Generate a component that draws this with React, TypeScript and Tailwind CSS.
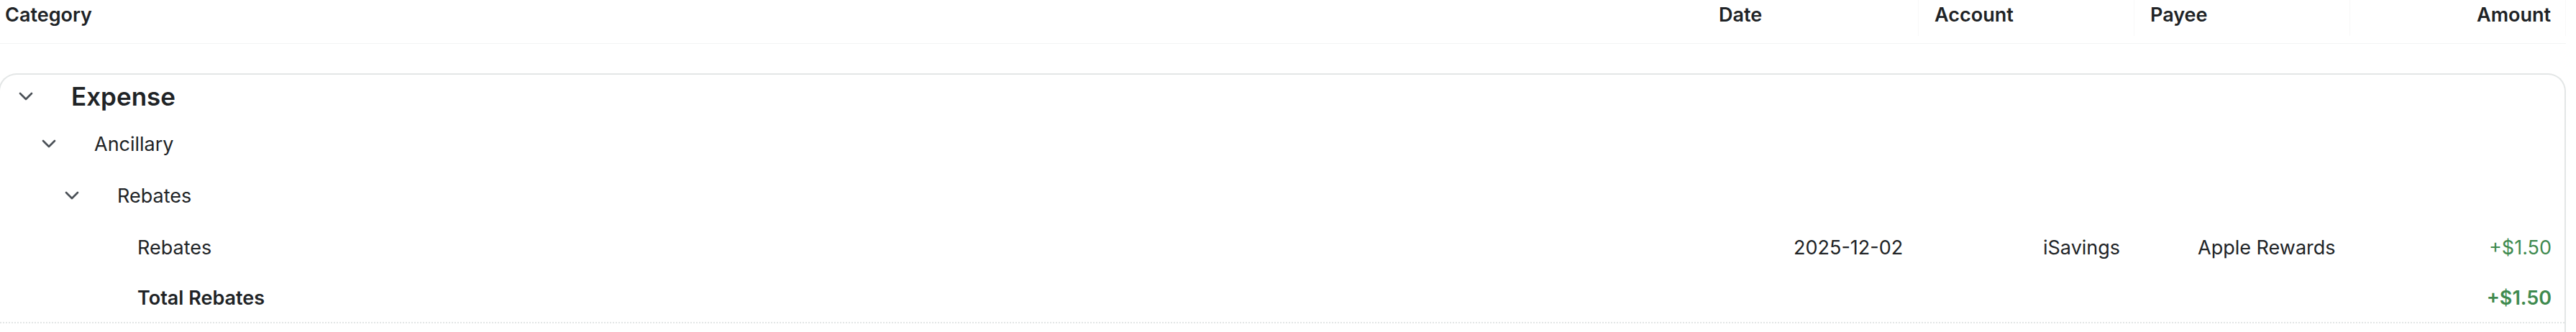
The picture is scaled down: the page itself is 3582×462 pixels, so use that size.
import { ChevronDown } from "lucide-react"

interface rowConfig {
    name: string;
    depth: number;
    kind: "group" | "leaf" | "total";
    height: string;
    date?: string;
    account?: string;
    payee?: string;
    amount?: string;
    big?: boolean;
}

// filas del arbol de categorias
const rows: rowConfig[] = [
    { name: "Expense", depth: 0, kind: "group", height: "h-[60px]", big: true },
    { name: "Ancillary", depth: 1, kind: "group", height: "h-[72px]" },
    { name: "Rebates", depth: 2, kind: "group", height: "h-[72px]" },
    { name: "Rebates", depth: 3, kind: "leaf", height: "h-[72px]", date: "2025-12-02", account: "iSavings", payee: "Apple Rewards", amount: "+$1.50" },
    { name: "Total Rebates", depth: 3, kind: "total", height: "h-[70px]", amount: "+$1.50" },
]

const padByDepth = ["pl-[20px]", "pl-[52px]", "pl-[84px]", "pl-[116px]"]

function Row({ row }: { row: rowConfig }) {
    return (
        <div className={`flex items-center ${row.height} ${row.kind === "total" ? "border-b-2 border-dotted border-[#e2e5e5]" : ""}`}>
            <div className={`w-[2494px] shrink-0 flex items-center ${row.kind === "group" ? padByDepth[row.depth] : "pl-[191px]"}`}>
                {row.kind === "group" && (
                    <ChevronDown size={32} strokeWidth={2} className="shrink-0 text-[#4b5157]" />
                )}
                <span
                    className={`leading-none ${row.kind === "group" ? "ml-[47px]" : ""} ${row.big ? "text-[35px] font-semibold" : "text-[27px]"} ${row.kind === "total" ? "font-semibold" : ""}`}
                >
                    {row.name}
                </span>
            </div>
            <div className="w-[347px] shrink-0 text-[27px] leading-none">{row.date}</div>
            <div className="w-[215px] shrink-0 text-[27px] leading-none">{row.account}</div>
            <div className="flex-1 text-[27px] leading-none">{row.payee}</div>
            <div className={`w-[200px] shrink-0 pr-[18px] text-right text-[27px] leading-none text-[#3f8a4f] ${row.kind === "total" ? "font-semibold" : ""}`}>
                {row.amount}
            </div>
        </div>
    )
}

export default function App() {
    const headCell = "w-[300px] shrink-0 h-[50px] leading-[42px] border-r border-[#f8f8f8] text-[27px] font-semibold"
    return (
        <div className="w-[3582px] min-h-[462px] overflow-hidden bg-white text-[#202326] font-['Inter','Noto_Sans',sans-serif]">
            <div className="flex w-[3568px] h-[61px] border-b border-[#f3f4f4]">
                <div className="flex-1 pl-[7px] h-[50px] leading-[42px] text-[27px] font-semibold">Category</div>
                <div className={`${headCell} pl-[22px]`}>Date</div>
                <div className={`${headCell} pl-[22px]`}>Account</div>
                <div className={`${headCell} pl-[22px]`}>Payee</div>
                <div className={`${headCell} pr-[20px] text-right`}>Amount</div>
            </div>
            <div className="h-[41px]" />
            <div className="ml-[-2px] w-[3570px] border-2 border-b-0 border-[#e3e6e6] rounded-t-[25px]">
                {rows.map((row, index) => (
                    <Row key={index} row={row} />
                ))}
                <div className="h-[40px]" />
            </div>
        </div>
    )
}
